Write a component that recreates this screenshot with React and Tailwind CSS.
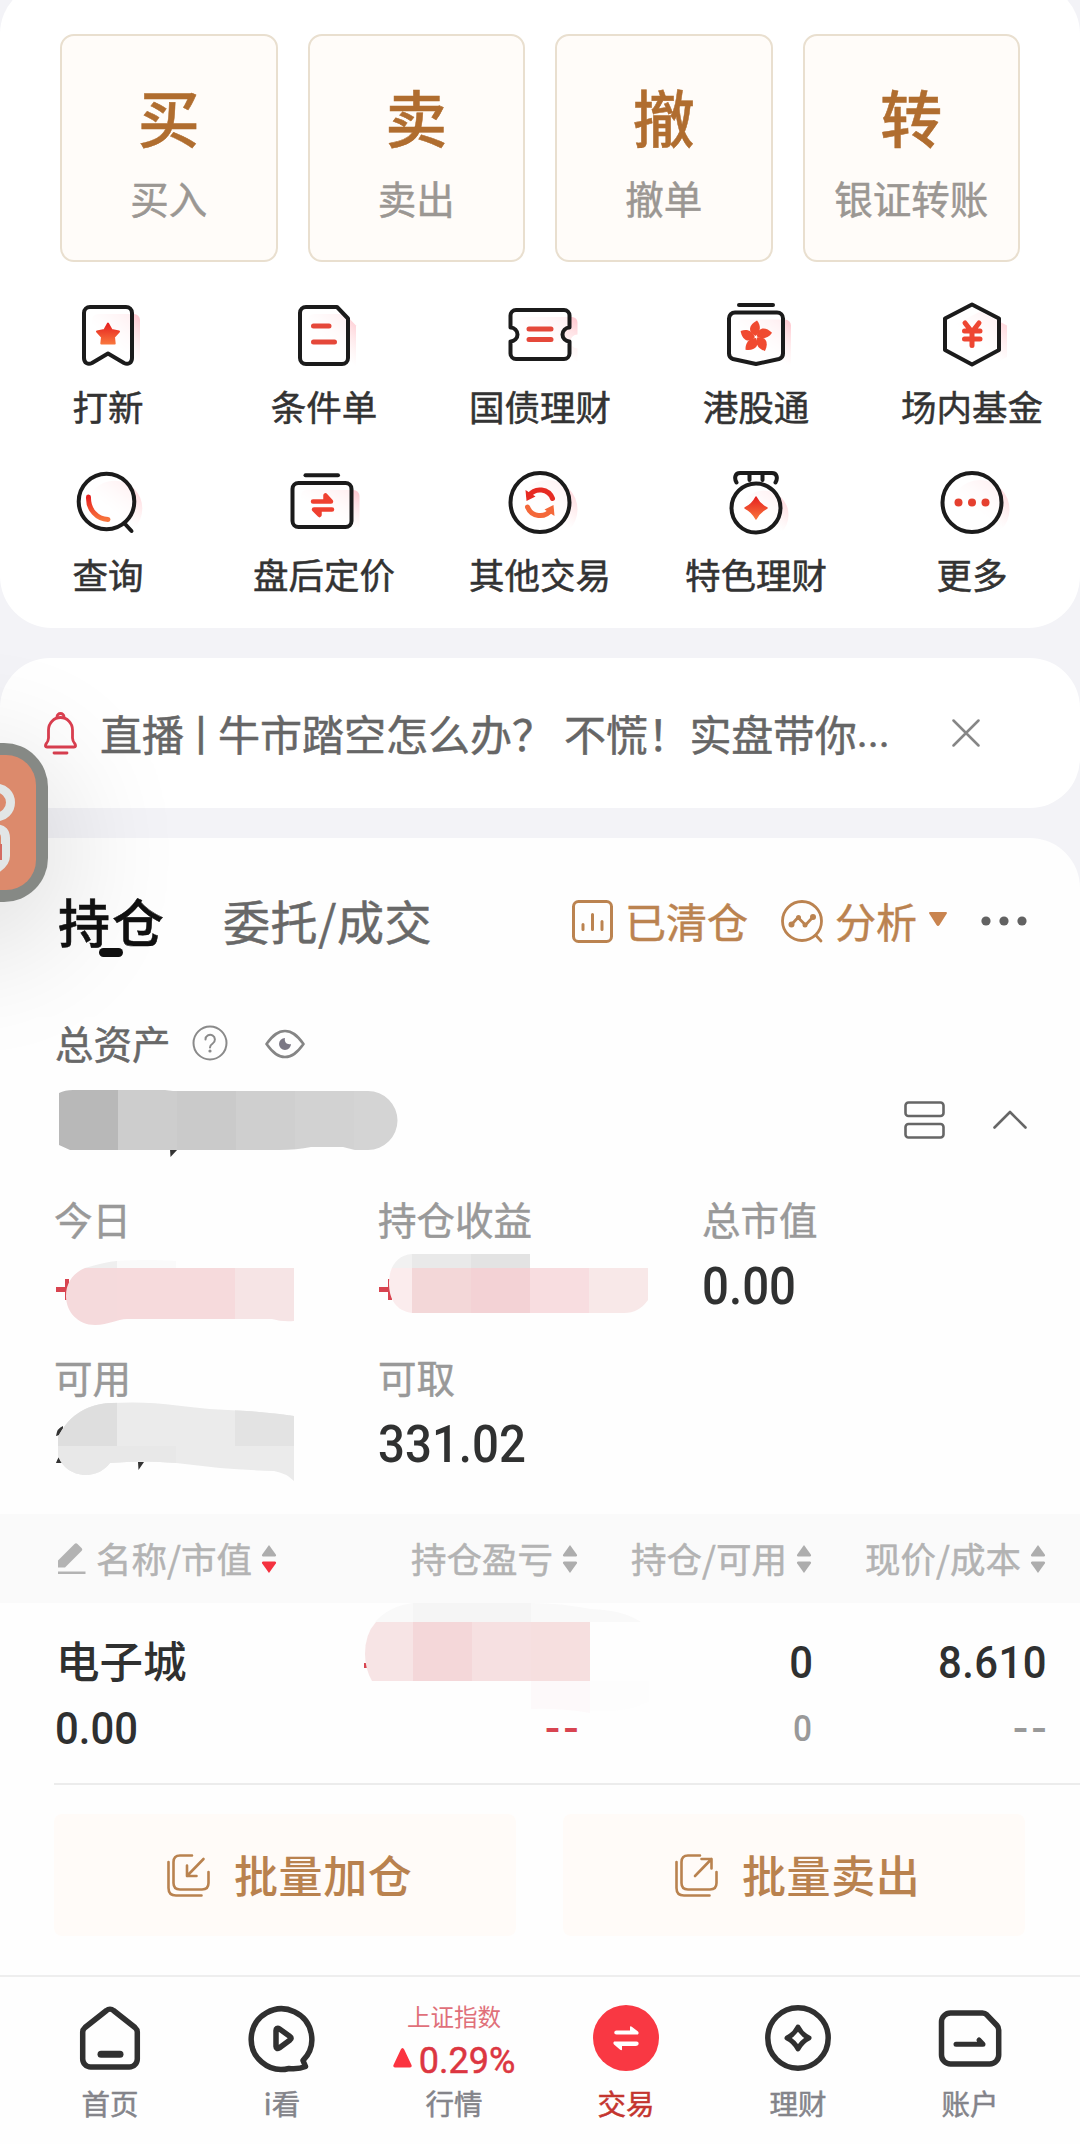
import React from 'react';

const INK = '#1b1b1b';

// Atajos principales de operación
const actions = [
  { mark: '买', label: '买入' },
  { mark: '卖', label: '卖出' },
  { mark: '撤', label: '撤单' },
  { mark: '转', label: '银证转账' },
];

// Marco común de los iconos: silueta rosa detrás y trazo oscuro delante
function ToolIcon({ outline, children }) {
  return (
    <svg width="80" height="72" viewBox="0 0 80 72" fill="none" className="overflow-visible">
      <g transform="translate(8 7)" fill="url(#glow)">{outline}</g>
      <g fill="#fff" fillOpacity="0.650">{outline}</g>
      <g stroke={INK} strokeWidth="4" strokeLinecap="round" strokeLinejoin="round">{outline}</g>
      {children}
    </svg>
  );
}

const tools = [
  {
    label: '打新',
    icon: (
      <ToolIcon outline={<path d="M22 9H58a6 6 0 0 1 6 6V60c0 5-4 7-8 5L40 55.500 24 65c-4 2-8 0-8-5V15a6 6 0 0 1 6-6z" />}>
        <path d="M40 25.500l3.600 6.500 7.400 1.600-5 5.400.7 6.500H33.300l.7-6.500-5-5.400 7.400-1.600z" fill="url(#fire)" stroke="url(#fire)" strokeWidth="2" strokeLinejoin="round" />
      </ToolIcon>
    ),
  },
  {
    label: '条件单',
    icon: (
      <ToolIcon outline={<path d="M22 9H53L64 20.500V60a6 6 0 0 1-6 6H22a6 6 0 0 1-6-6V15a6 6 0 0 1 6-6z" />}>
        <path d="M29.500 28H45M29.500 44H50.500" stroke="#e5483a" strokeWidth="5" strokeLinecap="round" />
      </ToolIcon>
    ),
  },
  {
    label: '国债理财',
    icon: (
      <ToolIcon outline={<path d="M16 12H64a5.500 5.500 0 0 1 5.500 5.500V29.500a7 7 0 0 0 0 14V55.500A5.500 5.500 0 0 1 64 61H16a5.500 5.500 0 0 1-5.500-5.500V43.500a7 7 0 0 0 0-14V17.500A5.500 5.500 0 0 1 16 12z" />}>
        <path d="M29 31H51M29 41.500H51" stroke="#e5483a" strokeWidth="5" strokeLinecap="round" />
      </ToolIcon>
    ),
  },
  {
    label: '港股通',
    icon: (
      <ToolIcon outline={<path d="M19 14.500H61a6 6 0 0 1 6 6V55.500c0 3-1 4.500-4 5.500L40 66 17 61c-3-1-4-2.500-4-5.500V20.500a6 6 0 0 1 6-6z" />}>
        <path d="M23 7H57" stroke={INK} strokeWidth="4" strokeLinecap="round" />
        {[0, 72, 144, 216, 288].map((deg) => (
          <path key={deg} d="M39.500 38C31 34 33 26.500 41 22.500C45.500 28 44.500 34 39.500 38z" fill="#f04a30" transform={`rotate(${deg} 40 39)`} />
        ))}
      </ToolIcon>
    ),
  },
  {
    label: '场内基金',
    icon: (
      <ToolIcon outline={<path d="M40 6.500L67 20.500V52L40 66.500 13 52V20.500z" />}>
        <path d="M33 25L40 34L47 25M32.500 33H48M32.500 41H48M40 34V47.500" stroke="#ee4632" strokeWidth="5" strokeLinecap="round" strokeLinejoin="round" />
      </ToolIcon>
    ),
  },
  {
    label: '查询',
    icon: (
      <ToolIcon outline={<circle cx="38.500" cy="35.500" r="27.800" />}>
        <path d="M57.500 58.500L63.500 65" stroke={INK} strokeWidth="4" strokeLinecap="round" />
        <path d="M20.500 31C20 44 29 53 40 53.500" stroke="url(#fire)" strokeWidth="5" strokeLinecap="round" />
      </ToolIcon>
    ),
  },
  {
    label: '盘后定价',
    icon: (
      <ToolIcon outline={<rect x="8.500" y="17" width="59" height="44" rx="6" />}>
        <path d="M21.500 9.300H54" stroke={INK} strokeWidth="4" strokeLinecap="round" />
        <path d="M29 35.500H47L41.500 29.500V34M48 43.500H30L35.500 49V45" stroke="#ef4030" strokeWidth="4.500" strokeLinecap="round" strokeLinejoin="round" />
      </ToolIcon>
    ),
  },
  {
    label: '其他交易',
    icon: (
      <ToolIcon outline={<circle cx="40" cy="36.500" r="29.500" />}>
        <path d="M29 29.500a13.500 13.500 0 0 1 23.500 3" stroke="#e62a22" strokeWidth="5" strokeLinecap="round" />
        <path d="M25.500 24l1 11 9-4.500z" fill="#e62a22" />
        <path d="M51 44a13.500 13.500 0 0 1-23.500-3" stroke="#f4683a" strokeWidth="5" strokeLinecap="round" />
        <path d="M54.500 50l-1-11-9 4.500z" fill="#f4683a" />
      </ToolIcon>
    ),
  },
  {
    label: '特色理财',
    icon: (
      <ToolIcon outline={<circle cx="40" cy="42" r="24.500" />}>
        <path d="M20.500 16.500C18 12 19 7 24 7H56C61 7 62 12 59.500 16.500M33.500 8v6M46.500 8v6" stroke={INK} strokeWidth="4" strokeLinecap="round" />
        <path d="M40 31c2.500 5 6 8.500 11 11-5 2.500-8.500 6-11 11-2.500-5-6-8.500-11-11 5-2.500 8.500-6 11-11z" fill="url(#fire)" stroke="url(#fire)" strokeWidth="1.500" strokeLinejoin="round" />
      </ToolIcon>
    ),
  },
  {
    label: '更多',
    icon: (
      <ToolIcon outline={<circle cx="40" cy="36.500" r="29.500" />}>
        <g fill="#e5402f">
          <circle cx="26.500" cy="36.500" r="4" />
          <circle cx="40" cy="36.500" r="4" />
          <circle cx="53.500" cy="36.500" r="4" />
        </g>
      </ToolIcon>
    ),
  },
];

function NavIcon({ children }) {
  return (
    <svg width="76" height="76" viewBox="0 0 76 76" fill="none" stroke="#303030" strokeWidth="5.500" strokeLinecap="round" strokeLinejoin="round">
      {children}
    </svg>
  );
}

const tabs = [
  {
    label: '首页',
    icon: (
      <NavIcon>
        <path d="M34.500 10.500c2-1.700 5-1.700 7 0L63 27.500c1.500 1.300 2.300 2.500 2.300 4.500V59a8 8 0 0 1-8 8H18.700a8 8 0 0 1-8-8V32c0-2 .8-3.200 2.300-4.500z" />
        <path d="M29 54.300H48" strokeWidth="7" />
      </NavIcon>
    ),
  },
  {
    label: 'i看',
    icon: (
      <NavIcon>
        <path d="M59 60.500A30.300 30.300 0 1 0 45 68.500C51 69 56 69 61.500 66.500z" />
        <path d="M32 30.500c0-2 1.500-3 3.200-1.800L46 36.500c1.500 1 1.500 2.500 0 3.500L35.200 48C33.500 49 32 48.500 32 46.500z" />
      </NavIcon>
    ),
  },
  { label: '行情', quote: { name: '上证指数', change: '0.29%' } },
  {
    label: '交易',
    active: true,
    icon: (
      <svg width="76" height="76" viewBox="0 0 76 76">
        <circle cx="38" cy="38" r="33" fill="#f93843" />
        <path d="M28.500 30.500H42V27c0-1 1-1 1.800-.3L50 31.500c1 1 .8 3-.8 3H28.500c-3 0-3-4 0-4zM47.500 46H34v3.500c0 1-1 1-1.800.3L26 44.500c-1-1-.8-3 .8-3H48.500c3 0 3 4.500-1 4.500z" fill="#fff" />
      </svg>
    ),
  },
  {
    label: '理财',
    icon: (
      <NavIcon>
        <circle cx="38" cy="38" r="30.200" />
        <path d="M38 27c2.500 5 6 8.500 11 11-5 2.500-8.500 6-11 11-2.500-5-6-8.500-11-11 5-2.500 8.500-6 11-11z" strokeWidth="5" />
      </NavIcon>
    ),
  },
  {
    label: '账户',
    icon: (
      <NavIcon>
        <path d="M18.500 13H50.500c2 0 3 .5 4.300 1.800L65 25.500c1.300 1.400 1.700 2.500 1.700 4.500V55a9 9 0 0 1-9 9H18.500a9 9 0 0 1-9-9V22a9 9 0 0 1 9-9z" />
        <path d="M24 44.300H51L47 40" strokeWidth="5" />
      </NavIcon>
    ),
  },
];

function SortArrows({ desc }) {
  return (
    <svg width="16" height="28" viewBox="0 0 16 28">
      <path d="M8 0l6.800 9.500c.6 1 .2 2-1 2H2.200c-1.200 0-1.600-1-1-2z" fill="#adadad" />
      <path d="M8 28l6.800-9.500c.6-1 .2-2-1-2H2.200c-1.200 0-1.600 1-1 2z" fill={desc ? '#f4323f' : '#adadad'} />
    </svg>
  );
}

function Amount({ children }) {
  return (
    <div className="mt-6 origin-left scale-x-[0.93] font-['Roboto'] text-[51px] leading-none font-medium text-[#303131] [-webkit-text-stroke:0px]">
      {children}
    </div>
  );
}

function Stat({ label, children }) {
  return (
    <div className="h-[158px]">
      <div className="h-[38px] text-[38.500px] leading-none whitespace-nowrap text-[#999]">{label}</div>
      {children}
    </div>
  );
}

// Importes ocultos: tiras de mosaico recortadas con el contorno del trazo
function TotalMask() {
  return (
    <svg width="345" height="72" viewBox="55 1086 345 72" className="block">
      <clipPath id="m-total">
        <path d="M59 1093q6-3 14-3h92l8 1h195a29.500 29.500 0 0 1 0 59h-13l-12-3h-32q-14 3-32 3H70l-11-5z" />
      </clipPath>
      <path d="M170 1149h8l-7.500 8z" fill="#333" />
      <g clipPath="url(#m-total)">
        <rect x="59" y="1086" width="59" height="70" fill="#b8b8b8" />
        <rect x="118" y="1086" width="59" height="70" fill="#cdcdcd" />
        <rect x="177" y="1086" width="59" height="70" fill="#cacaca" />
        <rect x="236" y="1086" width="59" height="70" fill="#cfcfcf" />
        <rect x="295" y="1086" width="59" height="70" fill="#d2d2d2" />
        <rect x="354" y="1086" width="50" height="70" fill="#d4d4d4" />
      </g>
    </svg>
  );
}

function TodayMask() {
  return (
    <svg width="250" height="90" viewBox="55 1250 250 90" className="mt-[13px] block">
      <path d="M57 1287h9v-8h4v21h-4v-8h-9z" fill="#d84450" />
      <path d="M86 1268q20-6 32-7v7z" fill="#efefef" />
      <path d="M118 1261q30-2 59 0v7h-59z" fill="#fafafa" />
      <clipPath id="m-today">
        <path d="M86 1268H295V1321q-12 1-22-2H128c-10 0-18 6-32 6-17 0-29-13-29-29 0-13 7-23 19-28z" />
      </clipPath>
      <g clipPath="url(#m-today)">
        <rect x="60" y="1268" width="58" height="60" fill="#f5dadc" />
        <rect x="118" y="1268" width="118" height="60" fill="#f6dadc" />
        <rect x="236" y="1268" width="59" height="60" fill="#f6e4e5" />
      </g>
    </svg>
  );
}

function ProfitMask() {
  return (
    <svg width="280" height="70" viewBox="379 1250 280 70" className="mt-[13px] block">
      <path d="M380 1287h9v-8h4v21h-4v-8h-9z" fill="#d84450" />
      <clipPath id="m-profit">
        <path d="M413 1254H649v46q-9 13-24 13H413c-16-2-23-14-23-30s8-28 23-29z" />
      </clipPath>
      <g clipPath="url(#m-profit)">
        <rect x="388" y="1254" width="25" height="14" fill="#f1f1f1" />
        <rect x="413" y="1254" width="59" height="14" fill="#e9e9e9" />
        <rect x="472" y="1254" width="59" height="14" fill="#e3e3e3" />
        <rect x="388" y="1268" width="25" height="46" fill="#fbeced" />
        <rect x="413" y="1268" width="59" height="46" fill="#f3d7d8" />
        <rect x="472" y="1268" width="59" height="46" fill="#f3d2d5" />
        <rect x="531" y="1268" width="59" height="46" fill="#f8dde0" />
        <rect x="590" y="1268" width="59" height="46" fill="#f8e8e8" />
      </g>
    </svg>
  );
}

function AvailableMask() {
  return (
    <svg width="280" height="84" viewBox="55 1398 280 84" className="mt-1 block">
      <path d="M57 1435q1-8 7-10v8zM57 1462q2-6 6-9v9zM139 1461h6l-5.500 8z" fill="#333" />
      <clipPath id="m-avail">
        <path d="M59 1436C68 1418 84 1403 112 1402q35-2 66 2.500 30 4 70 5.500 25 2 47 5v65q-8-8-20-10-28-1-54-3l-44-5q-32-3-66 0c-5 7-14 12-24 12-14 0-25-9-28-20z" />
      </clipPath>
      <g clipPath="url(#m-avail)">
        <rect x="55" y="1398" width="240" height="84" fill="#ebebeb" />
        <rect x="55" y="1398" width="63" height="47" fill="#dedede" />
        <rect x="55" y="1445" width="122" height="40" fill="#e8e8e8" />
        <rect x="236" y="1398" width="59" height="47" fill="#e3e3e3" />
      </g>
    </svg>
  );
}

function RowMask() {
  return (
    <svg width="290" height="115" viewBox="360 1600 290 115" className="absolute -top-[37px] left-4">
      <path d="M375 1622q14-16 38-19h118q30 0 60 6 32 1 50 13z" fill="#f9f9f9" />
      <rect x="413" y="1603" width="118" height="19" fill="#f5f5f5" />
      <rect x="364" y="1663" width="4" height="5" fill="#d84450" />
      <path d="M376 1622h37v59h-41q-7-12-7-27 0-20 11-32z" fill="#f7e4e5" />
      <rect x="413" y="1622" width="59" height="59" fill="#f4d7d9" />
      <rect x="472" y="1622" width="59" height="59" fill="#f6e0e1" />
      <rect x="531" y="1622" width="59" height="59" fill="#f6dfdf" />
      <path d="M531 1681h59v32q-30-5-59-4z" fill="#fdf9fa" />
      <path d="M590 1681h59v20q-20 12-59 10z" fill="#fdfdfd" />
    </svg>
  );
}

// Pegatina flotante pegada al borde izquierdo
function FloatingBubble() {
  return (
    <div className="absolute top-[743px] -left-[111px] size-[159px] rounded-[44px] bg-[#868985] p-3 shadow-[0_30px_130px_10px_rgba(0,0,0,0.14)]">
      <div className="flex size-full justify-end overflow-hidden rounded-[30px] bg-[#dc8a6c]">
        <svg width="36" height="135" viewBox="0 755 36 135" fill="none" stroke="#e2e6e6" strokeWidth="9">
          <path d="M-4 788a14.500 14.500 0 0 1 0 29" />
          <path d="M-8 829H-3Q5.500 829 5.500 838V856Q5.500 863 -4 869" />
          <path d="M0 844v16" stroke="#d46b62" strokeWidth="4" />
        </svg>
      </div>
    </div>
  );
}

export default function App() {
  return (
    <div className="relative flex h-[2144px] w-[1080px] flex-col overflow-hidden bg-[#f3f3f7] font-['Noto_Sans_CJK_SC',sans-serif] [-webkit-text-stroke:0.500px]">
      {/* Degradados compartidos por los iconos */}
      <svg width="0" height="0" className="absolute">
        <defs>
          <linearGradient id="fire" x1="0" y1="0" x2="0" y2="1">
            <stop offset="0" stopColor="#e6201f" />
            <stop offset="1" stopColor="#f8743c" />
          </linearGradient>
          <linearGradient id="glow" x1="1" y1="0.100" x2="0.600" y2="0.650">
            <stop offset="0" stopColor="#ff9aa8" stopOpacity="0.500" />
            <stop offset="1" stopColor="#ffd0d0" stopOpacity="0" />
          </linearGradient>
        </defs>
      </svg>

      {/* Operaciones y herramientas */}
      <section className="-mt-[18px] h-[646px] shrink-0 rounded-[52px] bg-white pt-[52px]">
        <div className="grid grid-cols-4 gap-[30px] px-[60px]">
          {actions.map((a) => (
            <div key={a.mark} className="flex h-[228px] flex-col items-center rounded-[14px] border-2 border-[#e9dfcf] bg-[#fffcf9] pt-[49px]">
              <span className="text-[62px] leading-none font-medium text-[#b06d2f]">{a.mark}</span>
              <span className="mt-[31px] text-[38.500px] leading-none whitespace-nowrap text-[#9b9793]">{a.label}</span>
            </div>
          ))}
        </div>
        <div className="mt-9 grid grid-cols-5 gap-y-[43px]">
          {tools.map((t) => (
            <div key={t.label} className="flex h-[125px] flex-col items-center">
              {t.icon}
              <span className="mt-[18px] text-[35.500px] leading-none whitespace-nowrap text-[#333]">{t.label}</span>
            </div>
          ))}
        </div>
      </section>

      {/* Aviso en directo */}
      <section className="mt-[30px] flex h-[150px] shrink-0 items-center rounded-[50px] bg-white pl-[43px]">
        <svg width="35" height="44" viewBox="0 0 35 44" fill="none" stroke="#dc3f50" strokeWidth="2.800" strokeLinecap="round" strokeLinejoin="round">
          <path d="M14 6a3.500 3.500 0 0 1 7 0" />
          <path d="M5.500 19a12 12.500 0 0 1 24 0V27q0 3 2.500 6 1.500 3-1 3H4q-2.500 0-1-3 2.500-3 2.500-6z" />
          <path d="M11 42H24" />
        </svg>
        <p className="ml-[22px] flex text-[42px] leading-none whitespace-nowrap text-[#666]">
          <span>直播</span>
          <span className="-mx-1">丨</span>
          <span>牛市踏空怎么办？</span>
          <span className="ml-[10px] tracking-[-0.200px]">不慌！实盘带你</span>
          <span className="font-['Roboto']">...</span>
        </p>
        <svg width="28" height="28" viewBox="0 0 28 28" stroke="#868686" strokeWidth="2.500" strokeLinecap="round" className="mr-[100px] ml-auto">
          <path d="M1.500 1.500l25 25M26.500 1.500l-25 25" />
        </svg>
      </section>

      {/* Cartera */}
      <section className="mt-[30px] h-[1137px] shrink-0 rounded-t-[50px] bg-[#fefefe] pt-[57px]">
        <div className="flex h-[52px] items-center pr-[53px] pl-[58px] whitespace-nowrap">
          <div className="relative text-[52px] leading-none font-medium tracking-[2px] text-[#111]">
            持仓
            <span className="absolute top-[53px] left-[41px] h-[9px] w-6 rounded-full bg-[#111]" />
          </div>
          <div className="ml-[57px] -translate-y-0.5 text-[47px] leading-none tracking-[0.500px] text-[#686868]">委托/成交</div>
          <div className="ml-auto flex items-center text-[41px] leading-none text-[#bb8350]">
            <svg width="41" height="43" viewBox="0 0 41 43" fill="none" stroke="currentColor" strokeWidth="3" strokeLinecap="round">
              <rect x="1.500" y="1.500" width="38" height="40" rx="5" />
              <path d="M11 24.500v5M20.500 14.500v15M30 21.500v8" />
            </svg>
            <span className="mr-0.5 ml-3 -translate-y-px">已清仓</span>
            <svg width="44" height="44" viewBox="0 0 44 44" fill="none" stroke="currentColor" strokeWidth="2.800" strokeLinecap="round" strokeLinejoin="round" className="ml-[31px]">
              <circle cx="21" cy="22" r="19.500" />
              <path d="M35 36.500l5 5.500M10.500 25.500L17 18.500 24.500 26 32 18" />
              <g fill="currentColor" stroke="none">
                <circle cx="10.500" cy="25.500" r="3" />
                <circle cx="17.500" cy="18.500" r="2.500" />
                <circle cx="24" cy="26" r="2.500" />
                <circle cx="32" cy="18" r="3" />
              </g>
            </svg>
            <span className="ml-[10px] -translate-y-px">分析</span>
            <svg width="18" height="14" viewBox="0 0 18 14" className="ml-3 -translate-y-0.5">
              <path d="M1.500 0h15c1.500 0 1.800 1 1 2L10.500 13c-.8 1.200-2.200 1.200-3 0L.5 2C-.3 1 0 0 1.500 0z" fill="#c9844f" />
            </svg>
          </div>
          <svg width="46" height="10" viewBox="0 0 46 10" fill="#626262" className="ml-[34px]">
            <circle cx="5" cy="5" r="4.600" />
            <circle cx="23" cy="5" r="4.600" />
            <circle cx="41" cy="5" r="4.600" />
          </svg>
        </div>

        <div className="mt-[77px] flex h-[38px] items-center pl-[55px] text-[#686868]">
          <span className="-translate-y-px text-[38.500px] leading-none">总资产</span>
          <svg width="36" height="36" viewBox="0 0 36 36" fill="none" stroke="#8a8a8a" strokeWidth="2" strokeLinecap="round" className="ml-[21px]">
            <circle cx="18" cy="18" r="16.500" />
            <path d="M13.500 14.500a4.700 4.700 0 1 1 7.200 4C18.500 20 18 20.500 18 22.500" />
            <circle cx="18" cy="26" r="1.600" fill="#8a8a8a" stroke="none" />
          </svg>
          <svg width="40" height="30" viewBox="0 0 40 30" fill="none" stroke="#858585" strokeWidth="2.600" strokeLinejoin="round" className="ml-[37px] translate-y-px">
            <path d="M1.500 15C8 6 13 2 20 2s12 4 18.500 13C32 24 27 28 20 28S8 24 1.500 15z" />
            <path d="M20 9a6 6 0 1 0 6 6c-4 1-7-2-6-6z" fill="#7b7885" stroke="none" />
          </svg>
        </div>

        <div className="mt-6 flex h-[68px] items-start pr-[53px] pl-[55px]">
          <TotalMask />
          <div className="ml-auto flex h-[67px] items-center text-[#666]">
            <svg width="41" height="38" viewBox="0 0 41 38" fill="none" stroke="currentColor" strokeWidth="2.600">
              <rect x="1.500" y="1.500" width="38" height="13.500" rx="3" />
              <rect x="1.500" y="23" width="38" height="13.500" rx="3" />
            </svg>
            <svg width="34" height="19" viewBox="0 0 34 19" fill="none" stroke="currentColor" strokeWidth="2.600" strokeLinecap="round" strokeLinejoin="round" className="ml-12">
              <path d="M1.500 17.500L17 2l15.500 15.500" />
            </svg>
          </div>
        </div>

        <div className="mt-[45px] grid h-[315px] grid-cols-[324px_324px_324px] pl-[54px]">
          <Stat label="今日"><TodayMask /></Stat>
          <Stat label="持仓收益"><ProfitMask /></Stat>
          <Stat label="总市值"><Amount>0.00</Amount></Stat>
          <Stat label="可用"><AvailableMask /></Stat>
          <Stat label="可取"><Amount>331.02</Amount></Stat>
        </div>

        {/* Tabla de posiciones */}
        <div className="grid h-[89px] grid-cols-[286px_234px_234px_234px] items-center bg-[#fafafa] pl-[58px] text-[35.500px] leading-none whitespace-nowrap text-[#b3b3b3]">
          <div className="flex items-center">
            <svg width="28" height="31" viewBox="0 0 28 31" fill="#b3b3b3">
              <path d="M0 24.500V17.500L16.500 1q1.500-1.500 3 0L23.500 5q1.500 1.500 0 3L7 24.500zM0 28.500H27.500V31H0z" />
            </svg>
            <span className="mr-[9px] ml-[10px] -translate-y-px">名称/市值</span>
            <SortArrows desc />
          </div>
          {['持仓盈亏', '持仓/可用', '现价/成本'].map((name) => (
            <div key={name} className="flex items-center justify-end gap-[9px]">
              <span className="-translate-y-px">{name}</span>
              <SortArrows />
            </div>
          ))}
        </div>

        <div className="ml-[54px] h-[182px] border-b-2 border-[#ececec] pt-[34px] pl-1">
          <div className="grid h-[46px] grid-cols-[286px_234px_234px_234px] items-center text-[45px] leading-none font-medium text-[#2f3030] [-webkit-text-stroke:0px]">
            <span className="-ml-0.5 text-[43.500px]">电子城</span>
            <div className="relative h-full"><RowMask /></div>
            <span className="origin-right translate-x-px translate-y-0.5 scale-x-[0.93] text-right font-['Roboto']">0</span>
            <span className="origin-right translate-x-px translate-y-0.5 scale-x-[0.93] text-right font-['Roboto'] tracking-[0.500px]">8.610</span>
          </div>
          <div className="mt-[23px] grid h-[45px] grid-cols-[286px_234px_234px_234px] items-center font-['Roboto'] text-[36px] leading-none font-medium text-[#999] [-webkit-text-stroke:0px]">
            <span className="-ml-[3px] origin-left scale-x-[0.93] text-[45px] text-[#2f3030]">0.00</span>
            <span className="-mr-[3px] text-right font-bold tracking-[1.500px] text-[#d84450]">
              <span className="inline-block origin-right scale-x-[1.180]">--</span>
            </span>
            <span className="origin-right scale-x-[0.93] text-right">0</span>
            <span className="-mr-[3px] text-right font-bold tracking-[1.500px]">
              <span className="inline-block origin-right scale-x-[1.180]">--</span>
            </span>
          </div>
        </div>

        <div className="mt-[29px] flex gap-[47px] pl-[54px] text-[44px] leading-none font-medium tracking-[0.600px] text-[#b9824f] [-webkit-text-stroke:0px]">
          <div className="flex h-[122px] w-[462px] items-center rounded-lg bg-[#fffbf8] pl-[113px]">
            <BatchIcon arrow="M36.500 5L20 22M20 11.500V22H29.500" />
            <span className="ml-6 -translate-y-px">批量加仓</span>
          </div>
          <div className="flex h-[122px] w-[462px] items-center rounded-lg bg-[#fffbf8] pl-[112px]">
            <BatchIcon arrow="M20 22L36.500 5M26.500 5H36.500V14.500" />
            <span className="ml-6 -translate-y-px">批量卖出</span>
          </div>
        </div>
      </section>

      {/* Barra inferior */}
      <nav className="grid h-[169px] shrink-0 grid-cols-6 border-t-2 border-[#eeeeee] bg-[#fefefe] px-6 pt-[23px]">
        {tabs.map((t) => (
          <div key={t.label} className="flex flex-col items-center">
            {t.quote ? (
              <div className="flex h-[76px] flex-col items-center pt-[5px]">
                <span className="text-[23.500px] leading-none text-[#e0707a] [-webkit-text-stroke:0px]">{t.quote.name}</span>
                <div className="mt-[14px] flex items-center gap-[7px]">
                  <svg width="19" height="20" viewBox="0 0 19 20" className="-translate-y-[3px]">
                    <path d="M9.500 0q1 0 1.700 1.500L18.500 17q.8 2.500-1.500 2.500H2Q-.3 19.500.5 17L7.800 1.500Q8.500 0 9.500 0z" fill="#fb3440" />
                  </svg>
                  <span className="font-['Roboto'] text-[36px] leading-none text-[#dc3641]">{t.quote.change}</span>
                </div>
              </div>
            ) : (
              t.icon
            )}
            <span className={`mt-[13px] text-[28.500px] leading-none ${t.active ? 'text-[#c4352f]' : 'text-[#84848a]'}`}>{t.label}</span>
          </div>
        ))}
      </nav>

      <FloatingBubble />
    </div>
  );
}

function BatchIcon({ arrow }) {
  return (
    <svg width="43" height="43" viewBox="0 0 43 43" fill="none" stroke="currentColor" strokeWidth="2.600" strokeLinecap="round" strokeLinejoin="round">
      <path d="M25 1.500H13Q6.500 1.500 6.500 8V29Q6.500 35.500 13 35.500H35Q41.500 35.500 41.500 29V18" />
      <path d="M1.500 8V34Q1.500 41.500 9 41.500H34.500" />
      <path d={arrow} />
    </svg>
  );
}
